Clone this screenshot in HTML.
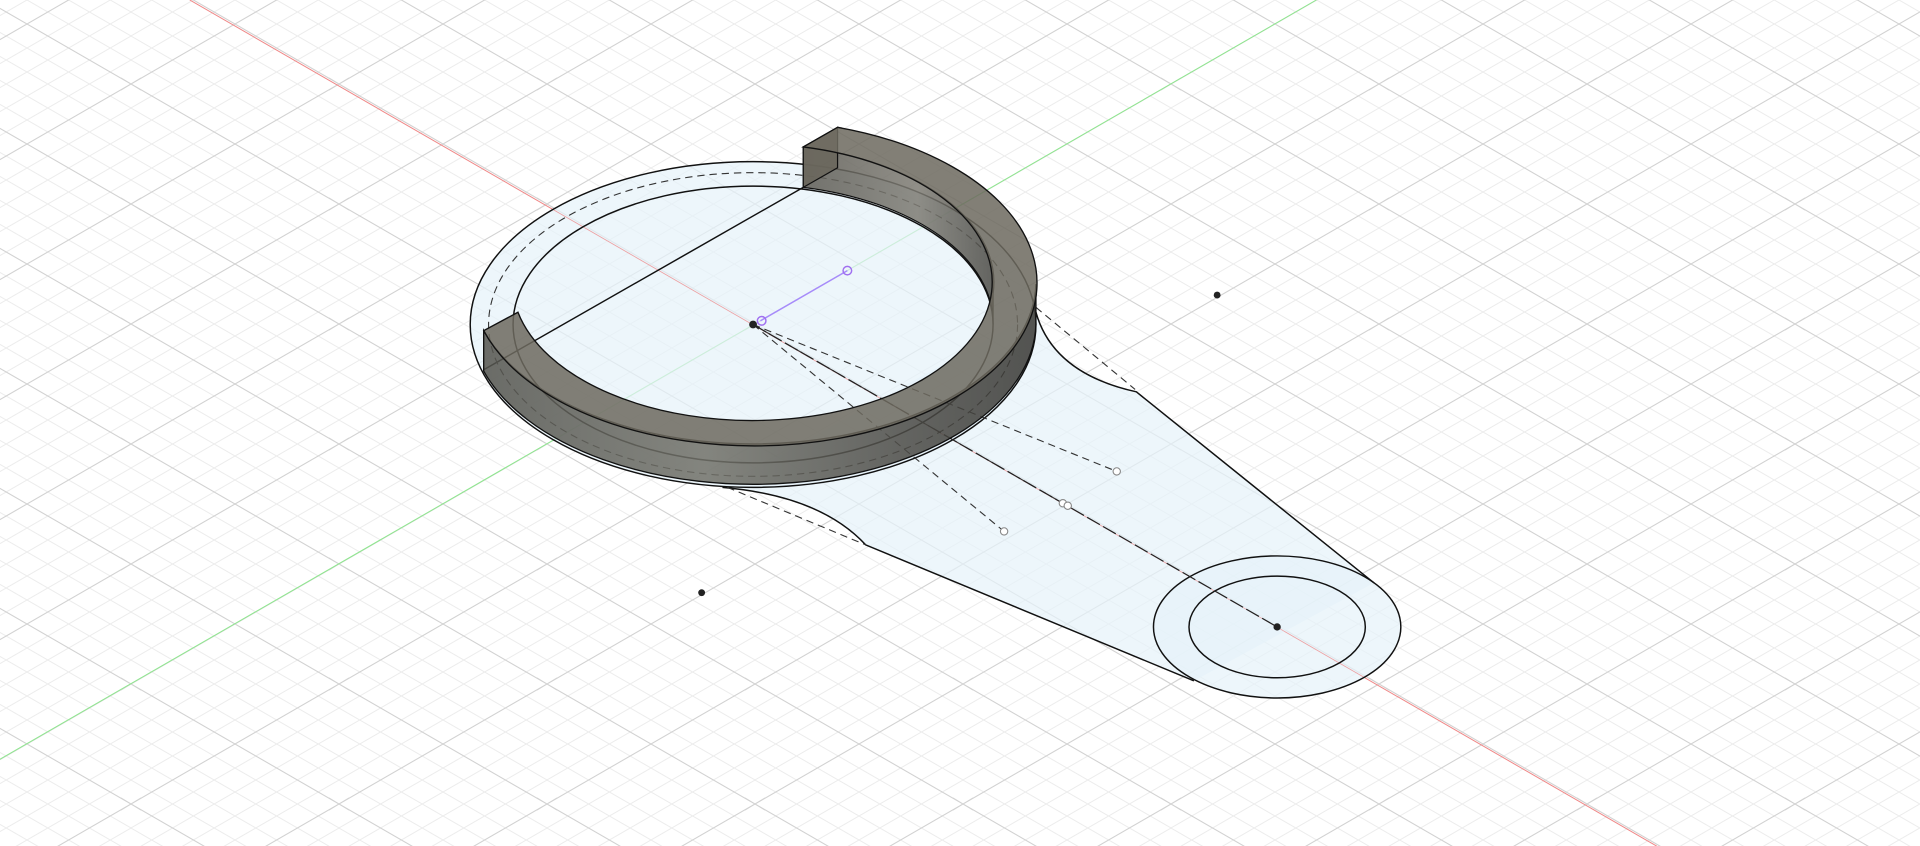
<!DOCTYPE html>
<html><head><meta charset="utf-8"><style>
html,body{margin:0;padding:0;background:#fff;overflow:hidden}
svg{display:block}
</style></head><body>
<svg width="1920" height="846" viewBox="0 0 1920 846" xmlns="http://www.w3.org/2000/svg">
<defs>
<pattern id="g" x="131" y="84" width="208" height="120" patternUnits="userSpaceOnUse">
<g stroke="#ececec" stroke-width="1" fill="none">
<path d="M0,24 L208,144 M0,48 L208,168 M0,72 L208,192 M0,96 L208,216 M0,-24 L208,96 M0,-48 L208,72 M0,-72 L208,48 M0,-96 L208,24"/>
<path d="M0,96 L208,-24 M0,72 L208,-48 M0,48 L208,-72 M0,24 L208,-96 M0,144 L208,24 M0,168 L208,48 M0,192 L208,72 M0,216 L208,96"/>
</g>
<g stroke="#d2d2d2" stroke-width="1.1" fill="none">
<path d="M0,0 L208,120 M0,120 L208,0 M-10,-6 L10,6 M198,114 L218,126 M-10,126 L10,114 M198,6 L218,-6"/>
</g>
</pattern>
<linearGradient id="wall" x1="0" x2="1" y1="0" y2="0">
<stop offset="0" stop-color="#55554f"/>
<stop offset="0.4" stop-color="#72726a"/>
<stop offset="0.75" stop-color="#4e4d48"/>
<stop offset="1" stop-color="#3a3935"/>
</linearGradient>
<linearGradient id="iwall" x1="0" x2="1" y1="0" y2="0">
<stop offset="0" stop-color="#5e5c55"/>
<stop offset="0.6" stop-color="#7e7c74"/>
<stop offset="1" stop-color="#4c4b46"/>
</linearGradient>
</defs>
<rect width="1920" height="846" fill="url(#g)"/>
<g transform="scale(1.2245)">
<line x1="155" y1="0" x2="1353" y2="691" stroke="#f08a8a" stroke-width="0.8"/>
<line x1="0" y1="620" x2="1075" y2="0" stroke="#8ee88e" stroke-width="0.8"/>
<g fill="#e6f2fa" fill-opacity="0.7">
<path d="M846,255 Q860,305 928,320 L1122,476 L975,556 L707,445 Q670,405 590,398 Z"/>
<ellipse cx="615" cy="265" rx="231" ry="133"/>
<ellipse cx="1043" cy="512" rx="101" ry="58"/>
</g>
<line x1="155" y1="0" x2="1353" y2="691" stroke="#f08a8a" stroke-width="0.6" opacity="0.7"/>
<g fill="none" stroke="#111" stroke-width="1.2">
<ellipse cx="615" cy="265" rx="231" ry="133"/>
<ellipse cx="615" cy="265" rx="196" ry="113"/>
<ellipse cx="1043" cy="512" rx="101" ry="58"/>
<ellipse cx="1043" cy="512" rx="72" ry="41.5"/>
<path d="M846,255 Q860,305 928,320 L1122,476"/>
<path d="M975,556 L707,445 Q670,405 590,398"/>
<line x1="656" y1="153" x2="395" y2="302"/>
</g>
<g fill="none" stroke="#333" stroke-width="0.9" stroke-dasharray="6,4">
<ellipse cx="615" cy="265" rx="216" ry="124"/>
<line x1="846" y1="251" x2="927" y2="318"/>
<line x1="594" y1="398" x2="707" y2="445"/>
<line x1="615" y1="265" x2="912" y2="385"/>
<line x1="615" y1="265" x2="820" y2="434"/>
<line x1="615" y1="265" x2="868" y2="411"/>
</g>
<line x1="615" y1="265" x2="1043" y2="512" stroke="#222" stroke-width="1" stroke-dasharray="12,3"/>
<!-- ring -->
<g fill-opacity="0.86">
<path d="M656,120 A196 113 0 0 1 811,240 L811,265 A196 113 0 0 0 656,153 Z" fill="url(#iwall)" stroke="#111" stroke-width="1"/>
<path d="M656,120 L684,104 L684,137 L656,153 Z" fill="#6a665c" stroke="#111" stroke-width="1"/>
<path d="M395,270 A231 133 0 0 0 846,232 L846,265 A231 133 0 0 1 395,303 Z" fill="url(#wall)" stroke="#111" stroke-width="1.1"/>
<path d="M684,104 A231 133 0 1 1 395,270 L423,255 A196 113 0 1 0 656,120 Z" fill="#6e6a5f" stroke="#111" stroke-width="1.1"/>
</g>
<line x1="621" y1="262" x2="692" y2="221" stroke="#a78bfa" stroke-width="1.2"/>
<circle cx="692" cy="221" r="3.5" fill="none" stroke="#a070f0" stroke-width="1.2"/>
<circle cx="622" cy="262" r="3.5" fill="none" stroke="#a070f0" stroke-width="1.2"/>
<g fill="#222">
<circle cx="615" cy="265" r="3.2"/>
<circle cx="994" cy="241" r="2.8"/>
<circle cx="573" cy="484" r="2.8"/>
<circle cx="1043" cy="512" r="3"/>
</g>
<g fill="#fff" stroke="#888" stroke-width="0.9">
<circle cx="912" cy="385" r="3"/>
<circle cx="820" cy="434" r="3"/>
<circle cx="868" cy="411" r="3"/>
<circle cx="872" cy="413" r="3"/>
</g>
</g>
</svg>
</body></html>
